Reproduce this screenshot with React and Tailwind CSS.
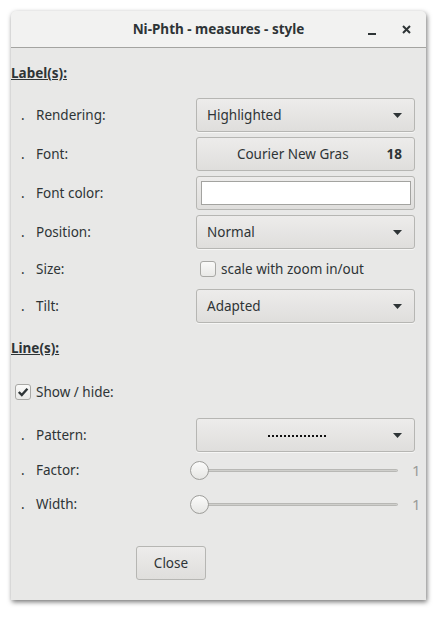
import React from "react";

const font = { fontFamily: '"Noto Sans", "Open Sans", sans-serif' };

function Arrow() {
  return (
    <svg width="9" height="5" viewBox="0 0 9 5" className="shrink-0">
      <path d="M0 0 L9 0 L4.5 5 Z" fill="#2e3436" />
    </svg>
  );
}

function Combo({ children, center }) {
  return (
    <div className="flex h-[34px] w-[219px] items-center rounded-[3px] border border-[#b6b6b3] bg-gradient-to-b from-[#edeceb] to-[#dfdedc] pl-[10px] pr-[12px] shadow-[0_1px_0_rgba(255,255,255,0.6)]">
      <div className={center ? "flex flex-1 justify-center pr-[6px]" : "flex-1"}>{children}</div>
      <Arrow />
    </div>
  );
}

function Row({ label, children, h = "h-[34px]", mt = "mt-[5px]" }) {
  return (
    <div className={`flex ${h} ${mt} items-center`}>
      <div className="flex w-[185px] items-center">
        <span className="w-[15px] pl-[10px]">.</span>
        <span className="ml-[10px]">{label}</span>
      </div>
      {children}
    </div>
  );
}

function Slider() {
  return (
    <div className="flex w-[230px] items-center">
      <div className="relative flex h-[20px] flex-1 items-center">
        <div className="ml-[9px] mr-[2px] h-[3px] flex-1 rounded-full border border-[#b8b8b5] bg-[#cfcfcc]" />
        <div className="absolute left-0 top-[1px] h-[19px] w-[19px] rounded-full border border-[#9d9d9a] bg-gradient-to-b from-[#fbfbfa] to-[#e6e6e4]" />
      </div>
      <span className="ml-[12px] w-[8px] text-[15px] text-[#9a9b98]">1</span>
    </div>
  );
}

function Check({ checked }) {
  return (
    <div className="flex h-[16px] w-[16px] items-center justify-center rounded-[3px] border border-[#a8a8a5] bg-gradient-to-b from-[#fafaf9] to-[#e9e9e7]">
      {checked && (
        <svg width="12" height="12" viewBox="0 0 12 12">
          <path d="M1.8 6 L4.8 9 L10.4 2.8" fill="none" stroke="#2e3436" strokeWidth="2.4" />
        </svg>
      )}
    </div>
  );
}

export default function App() {
  return (
    <div className="h-[619px] w-[445px] bg-white pl-[11px] pt-[11px] text-[13.5px] text-[#2e3436]" style={font}>
      <div className="flex h-[589px] w-[415px] flex-col rounded-t-[5px] bg-[#e8e8e7] shadow-[1px_2px_5px_rgba(0,0,0,0.55)]">
        {/* title bar */}
        <div className="relative flex h-[37px] shrink-0 items-center justify-center rounded-t-[5px] border-b border-[#a4a4a1] bg-[#f2f2f1]">
          <span className="text-[13.5px] font-bold text-[#2e3436]">Ni-Phth - measures - style</span>
          <div className="absolute right-[15px] top-0 flex h-full items-center gap-[26px]">
            <div className="mt-[9px] h-[2px] w-[8px] bg-[#2e3436]" />
            <svg width="9" height="9" viewBox="0 0 9 9">
              <path d="M1 1 L8 8 M8 1 L1 8" stroke="#2e3436" strokeWidth="2" />
            </svg>
          </div>
        </div>

        {/* body */}
        <div className="flex flex-col">
          <div className="mt-[14px] flex h-[22px] items-center font-bold underline">Label(s):</div>

          <Row label="Rendering:" mt="mt-[14px]">
            <Combo>Highlighted</Combo>
          </Row>
          <Row label="Font:">
            <div className="flex h-[34px] w-[219px] items-center rounded-[3px] border border-[#b6b6b3] bg-gradient-to-b from-[#edeceb] to-[#dfdedc] pr-[12px]">
              <span className="flex-1 pl-[12px] text-center">Courier New Gras</span>
              <span className="ml-[10px] font-bold">18</span>
            </div>
          </Row>
          <Row label="Font color:">
            <div className="flex h-[34px] w-[219px] items-center justify-center rounded-[3px] border border-[#b6b6b3] bg-gradient-to-b from-[#edeceb] to-[#dfdedc]">
              <div className="h-[24px] w-[210px] border border-[#a3a3a0] bg-white" />
            </div>
          </Row>
          <Row label="Position:">
            <Combo>Normal</Combo>
          </Row>
          <Row label="Size:" h="h-[30px]">
            <div className="flex items-center pl-[4px]">
              <Check />
              <span className="ml-[5px]">scale with zoom in/out</span>
            </div>
          </Row>
          <Row label="Tilt:">
            <Combo>Adapted</Combo>
          </Row>

          <div className="mt-[14px] flex h-[22px] items-center font-bold underline">Line(s):</div>

          <div className="mt-[22px] flex h-[22px] items-center pl-[4px]">
            <Check checked />
            <span className="ml-[5px]">Show / hide:</span>
          </div>

          <Row label="Pattern:" mt="mt-[15px]">
            <Combo center>
              <div className="mt-[2px] h-[2px] w-[58px] border-t-2 border-dotted border-[#111]" />
            </Combo>
          </Row>
          <Row label="Factor:" h="h-[24px]" mt="mt-[6px]">
            <div className="-ml-[6px]">
              <Slider />
            </div>
          </Row>
          <Row label="Width:" h="h-[24px]" mt="mt-[10px]">
            <div className="-ml-[6px]">
              <Slider />
            </div>
          </Row>

          <div className="mt-[30px] flex pl-[125px]">
            <div className="flex h-[34px] w-[70px] items-center justify-center rounded-[3px] border border-[#b6b6b3] bg-gradient-to-b from-[#edeceb] to-[#dfdedc]">
              Close
            </div>
          </div>
        </div>
      </div>
    </div>
  );
}
